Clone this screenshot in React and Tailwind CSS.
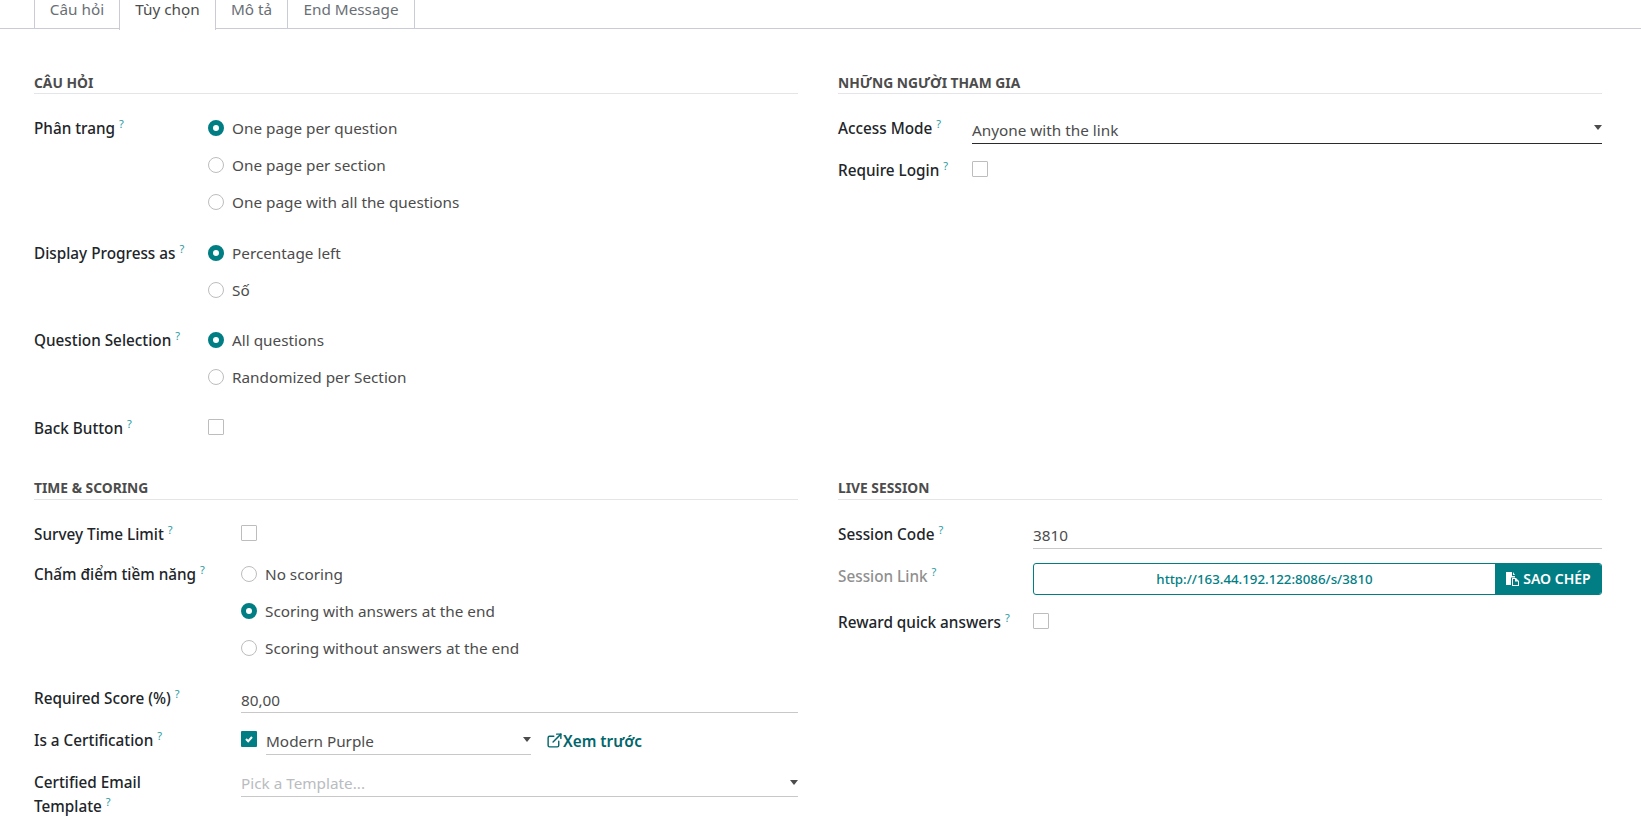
import React from "react";
import { ExternalLink } from "lucide-react";

const Hint = () => (
  <sup className="ml-[4px] text-[11px] font-normal text-[#2a9aa0] leading-none relative -top-[6px]">?</sup>
);

const Label = ({ children, width, muted, className = "" }) => (
  <div
    className={`shrink-0 text-[15.3px] leading-[23px] font-medium ${muted ? "text-[#8f8f8f]" : "text-[#212529]"} ${className}`}
    style={{ width }}
  >
    {children}
    <Hint />
  </div>
);

const Radio = ({ on, text, className = "" }) => (
  <div className={`flex items-center h-[23px] ${className}`}>
    {on ? (
      <span className="w-[16px] h-[16px] rounded-full border-[5px] border-[#017e84] bg-white shrink-0 -mt-[2px]" />
    ) : (
      <span className="w-[16px] h-[16px] rounded-full border border-[#bdbdbd] bg-white shrink-0 -mt-[2px]" />
    )}
    <span className="ml-[8px] text-[#4c4c4c]">{text}</span>
  </div>
);

const Check = ({ on }) =>
  on ? (
    <span className="w-[16px] h-[16px] rounded-[1px] bg-[#017e84] flex items-center justify-center shrink-0">
      <svg width="10" height="10" viewBox="0 0 10 10" fill="none" stroke="white" strokeWidth="2">
        <path d="M2 5l2.2 2.2L8 3" />
      </svg>
    </span>
  ) : (
    <span className="block w-[16px] h-[16px] rounded-[1px] border border-[#bdbdbd] bg-white shrink-0" />
  );

const Caret = () => (
  <span className="w-0 h-0 border-x-[4px] border-x-transparent border-t-[5px] border-t-[#4c4c4c]" />
);

const Heading = ({ children, className = "pb-[1px]" }) => (
  <div className={`text-[13.8px] leading-[18px] font-bold text-[#4c4c4c] uppercase border-b border-[#e3e5e8] ${className}`}>
    {children}
  </div>
);

const CopyIcon = () => (
  <svg width="16" height="16" viewBox="0 0 16 16" className="shrink-0">
    <path fill="white" d="M1 1h6v4h3v1.5H6V14H1z" />
    <path fill="white" d="M8 1l2 3H8z" />
    <path fill="white" fillRule="evenodd" d="M7 7h4l3 3v5H7zM8 8v6h5v-3.5h-3V8z" />
  </svg>
);

const tabs = [
  ["Câu hỏi", "w-[86px]", false],
  ["Tùy chọn", "w-[97px]", true],
  ["Mô tả", "w-[73px]", false],
  ["End Message", "w-[128px]", false],
];

export default function App() {
  return (
    <div className="min-h-[826px] bg-white text-[15.3px] leading-[23px] text-[#4c4c4c] font-['Noto_Sans',sans-serif]">
      <div className="flex h-[29px] pl-[34px] border-b border-[#c9ccd4]">
        {tabs.map(([t, w, active]) => (
          <div
            key={t}
            className={`${w} flex justify-center border-x border-[#c9ccd4] -mr-px leading-[18px] ${
              active ? "bg-white text-[#4c4c4c] h-[30px]" : "text-[#6a6f76] h-[29px]"
            }`}
          >
            {t}
          </div>
        ))}
      </div>

      <div className="pl-[34px] pr-[40px]">
        <div className="grid grid-cols-[764px_764px] gap-x-[40px]">
          {/* CÂU HỎI */}
          <section className="pt-[45px] h-[450px]">
            <Heading>Câu hỏi</Heading>
            <div className="flex mt-[23px]">
              <Label width="174px">Phân trang</Label>
              <div className="flex flex-col gap-[14px]">
                <Radio on text="One page per question" />
                <Radio text="One page per section" />
                <Radio text="One page with all the questions" />
              </div>
            </div>
            <div className="flex mt-[28px]">
              <Label width="174px">Display Progress as</Label>
              <div className="flex flex-col gap-[14px]">
                <Radio on text="Percentage left" />
                <Radio text="Số" />
              </div>
            </div>
            <div className="flex mt-[27px]">
              <Label width="174px">Question Selection</Label>
              <div className="flex flex-col gap-[14px]">
                <Radio on text="All questions" />
                <Radio text="Randomized per Section" />
              </div>
            </div>
            <div className="flex mt-[28px]">
              <Label width="174px">Back Button</Label>
              <div className="pt-[2px]"><Check /></div>
            </div>
          </section>

          {/* NHỮNG NGƯỜI THAM GIA */}
          <section className="pt-[45px]">
            <Heading>Những người tham gia</Heading>
            <div className="flex mt-[23px]">
              <Label width="134px">Access Mode</Label>
              <div className="flex-1 h-[27px] border-b border-[#2b2b2b] flex justify-between pt-[2px]">
                <span>Anyone with the link</span>
                <span className="mt-[6px] flex"><Caret /></span>
              </div>
            </div>
            <div className="flex mt-[15px]">
              <Label width="134px">Require Login</Label>
              <div className="pt-[2px]"><Check /></div>
            </div>
          </section>

          {/* TIME & SCORING */}
          <section>
            <Heading className="pb-[2px]">Time &amp; Scoring</Heading>
            <div className="flex mt-[23px]">
              <Label width="207px">Survey Time Limit</Label>
              <div className="pt-[2px]"><Check /></div>
            </div>
            <div className="flex mt-[17px]">
              <Label width="207px">Chấm điểm tiềm năng</Label>
              <div className="flex flex-col gap-[14px]">
                <Radio text="No scoring" />
                <Radio on text="Scoring with answers at the end" />
                <Radio text="Scoring without answers at the end" />
              </div>
            </div>
            <div className="flex mt-[27px]">
              <Label width="207px">Required Score (%)</Label>
              <div className="flex-1 h-[26px] border-b border-[#c8c8c8] pt-[2px]">80,00</div>
            </div>
            <div className="flex mt-[16px]">
              <Label width="207px">Is a Certification</Label>
              <div className="flex flex-1">
                <div className="pt-[2px]"><Check on /></div>
                <div className="ml-[9px] w-[265px] h-[26px] border-b border-[#c8c8c8] flex justify-between">
                  <span className="pt-[1px]">Modern Purple</span>
                  <span className="mt-[8px] flex"><Caret /></span>
                </div>
                <div className="ml-[15px] flex items-start text-[#01666b] font-semibold pt-[1px]">
                  <ExternalLink size={17} strokeWidth={2} className="mt-[2px]" />
                  <span>Xem trước</span>
                </div>
              </div>
            </div>
            <div className="flex mt-[15px]">
              <div className="shrink-0 w-[207px] leading-[24px] font-medium text-[#212529]">
                Certified Email<br />Template<Hint />
              </div>
              <div className="flex-1 h-[27px] border-b border-[#c8c8c8] flex justify-between text-[#b9bcc0] pt-[2px]">
                <span>Pick a Template...</span>
                <span className="mt-[8px] flex"><Caret /></span>
              </div>
            </div>
          </section>

          {/* LIVE SESSION */}
          <section>
            <Heading className="pb-[2px]">Live Session</Heading>
            <div className="flex mt-[23px]">
              <Label width="195px">Session Code</Label>
              <div className="flex-1 h-[26px] border-b border-[#c8c8c8] pt-[1px]">3810</div>
            </div>
            <div className="flex mt-[14px]">
              <Label width="195px" muted className="pt-[2px]">Session Link</Label>
              <div className="flex-1 h-[32px] flex rounded-[3px] border border-[#017e84] overflow-hidden">
                <div className="flex-1 text-center text-[13.3px] leading-[30px] font-medium text-[#017e84]">
                  http://163.44.192.122:8086/s/3810
                </div>
                <div className="w-[106px] bg-[#017e84] text-white text-[14px] font-semibold leading-[30px] flex items-center justify-center gap-[2px]">
                  <CopyIcon />
                  <span>SAO CHÉP</span>
                </div>
              </div>
            </div>
            <div className="flex mt-[16px]">
              <Label width="195px">Reward quick answers</Label>
              <div className="pt-[2px]"><Check /></div>
            </div>
          </section>
        </div>
      </div>
    </div>
  );
}
